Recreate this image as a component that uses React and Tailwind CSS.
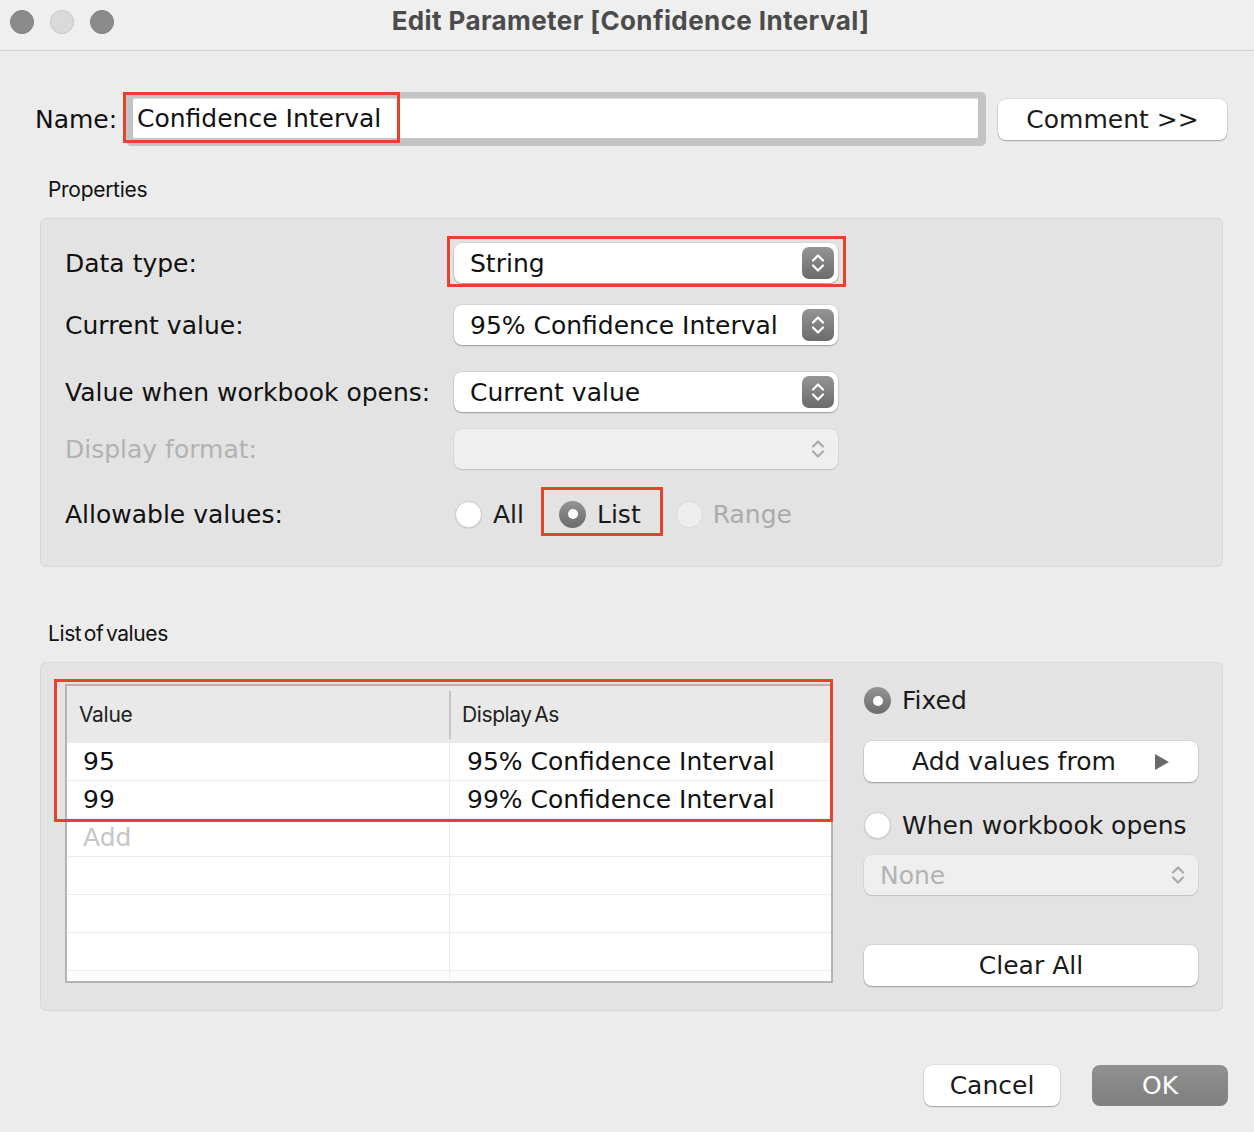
import React from "react";

const body = "font-['DejaVu_Sans',sans-serif]";
const sf = "font-['Inter',sans-serif]";

function Chevrons({ color }) {
  return (
    <svg width="32" height="32" viewBox="0 0 32 32">
      <path d="M11 13.5 L16 8.5 L21 13.5" stroke={color} strokeWidth="2.2" fill="none" strokeLinecap="round" strokeLinejoin="round" />
      <path d="M11 18.5 L16 23.5 L21 18.5" stroke={color} strokeWidth="2.2" fill="none" strokeLinecap="round" strokeLinejoin="round" />
    </svg>
  );
}

function Stepper() {
  return (
    <div className="w-[32px] h-[32px] rounded-[7px] bg-linear-to-b from-[#959595] to-[#6b6b6b] flex items-center justify-center">
      <Chevrons color="#ffffff" />
    </div>
  );
}

function Select({ text, disabled, width = "w-[384px]", textClass = "text-[#111]", pl = "pl-[16px]" }) {
  return (
    <div
      className={`${width} h-[40px] rounded-[8px] flex items-center justify-between ${pl} pr-[4px] ${
        disabled
          ? "bg-[#efefef] shadow-[0_0_0_0.5px_rgba(0,0,0,0.08),0_1px_1px_rgba(0,0,0,0.12)]"
          : "bg-white shadow-[0_0_0_0.5px_rgba(0,0,0,0.12),0_1px_1.5px_rgba(0,0,0,0.28)]"
      }`}
    >
      <span className={`${body} text-[25px] leading-none ${textClass}`}>{text}</span>
      {disabled ? <Chevrons color="#a9a9a9" /> : <Stepper />}
    </div>
  );
}

function Radio({ state }) {
  if (state === "on")
    return (
      <div className="w-[27px] h-[27px] rounded-full bg-linear-to-b from-[#949494] to-[#6c6c6c] flex items-center justify-center shrink-0">
        <div className="w-[10px] h-[10px] rounded-full bg-white" />
      </div>
    );
  if (state === "disabled")
    return <div className="w-[27px] h-[27px] rounded-full bg-[#eeeeee] border border-[#dadada] shrink-0" />;
  return (
    <div className="w-[27px] h-[27px] rounded-full bg-white border border-[#cdcdcd] shadow-[0_0.5px_1px_rgba(0,0,0,0.15)] shrink-0" />
  );
}

function Button({ children, className = "" }) {
  return (
    <div
      className={`h-[41px] rounded-[8px] bg-white shadow-[0_0_0_0.5px_rgba(0,0,0,0.12),0_1px_1.5px_rgba(0,0,0,0.28)] flex items-center ${body} text-[25px] leading-none text-[#1a1a1a] ${className}`}
    >
      {children}
    </div>
  );
}

function Row({ label, children, className = "", labelClass = "text-[#111]" }) {
  return (
    <div className={`flex items-center h-[40px] ${className}`}>
      <div className={`w-[389px] ${body} text-[25px] leading-none ${labelClass}`}>{label}</div>
      {children}
    </div>
  );
}

const RED = "border-[3px] border-[#e5432e]";

export default function App() {
  const rows = [
    ["95", "95% Confidence Interval", false],
    ["99", "99% Confidence Interval", false],
    ["Add", "", true],
    ["", "", false],
    ["", "", false],
    ["", "", false],
  ];
  return (
    <div className="w-[1254px] h-[1132px] bg-[#ececec] overflow-hidden flex flex-col">
      {/* Title bar */}
      <div className="h-[51px] shrink-0 bg-[#efefef] border-b border-[#d3d3d3] grid grid-cols-[1fr_auto_1fr]">
        <div className="flex gap-[16px] pl-[10px] pt-[10px]">
          <div className="w-[24px] h-[24px] rounded-full bg-[#8b8b8b] border border-[#7d7d7d]" />
          <div className="w-[24px] h-[24px] rounded-full bg-[#dadada] border border-[#c6c6c6]" />
          <div className="w-[24px] h-[24px] rounded-full bg-[#8b8b8b] border border-[#7d7d7d]" />
        </div>
        <div className={`${sf} pl-[7px] pt-[6px] text-[26px] leading-[30px] font-bold text-[#4b4b4b] tracking-[0.4px]`}>
          Edit Parameter [Confidence Interval]
        </div>
        <div />
      </div>

      {/* Name row */}
      <div className="mt-[41px] flex items-start pl-[35px]">
        <div className={`w-[91px] h-[54px] flex items-center ${body} text-[25px] leading-none text-[#111]`}>Name:</div>
        <div className="relative w-[860px] h-[54px] rounded-[5px] bg-[#c3c4c6] pt-[6px] pl-[7px] pr-[8px] pb-[8px]">
          <div className="h-[40px] bg-white flex items-center pl-[4px] shadow-[inset_0_1px_1px_rgba(0,0,0,0.15)]">
            <span className={`${body} text-[25px] leading-none text-[#111]`}>Confidence Interval</span>
          </div>
          <div className={`absolute left-[-3px] top-0 w-[277px] h-[51px] ${RED}`} />
        </div>
        <Button className="ml-[12px] mt-[7px] w-[229px] justify-center">Comment &gt;&gt;</Button>
      </div>

      {/* Properties */}
      <div className={`mt-[32px] pl-[48px] ${sf} text-[21px] leading-[24px] tracking-[-0.3px] text-[#111]`}>Properties</div>
      <div className="mt-[16px] ml-[40px] w-[1183px] h-[349px] shrink-0 rounded-[6px] bg-[#e3e3e3] border border-[#d8d8d8] pl-[24px] pt-[24px] flex flex-col">
        <Row label="Data type:">
          <div className="relative">
            <Select text="String" />
            <div className={`absolute left-[-7px] top-[-7px] w-[399px] h-[51px] ${RED}`} />
          </div>
        </Row>
        <Row label="Current value:" className="mt-[22px]">
          <Select text="95% Confidence Interval" />
        </Row>
        <Row label="Value when workbook opens:" className="mt-[27px]">
          <Select text="Current value" />
        </Row>
        <Row label="Display format:" className="mt-[17px]" labelClass="text-[#b2b2b2]">
          <Select text="" disabled />
        </Row>
        <Row label="Allowable values:" className="mt-[25px]">
          <div className="flex items-center h-[40px]">
            <div className="ml-[1px] flex items-center gap-[11px] h-[40px]">
              <Radio state="off" />
              <span className={`${body} text-[25px] leading-none text-[#1a1a1a]`}>All</span>
            </div>
            <div className="relative ml-[35px] flex items-center gap-[11px] h-[40px]">
              <Radio state="on" />
              <span className={`${body} text-[25px] leading-none text-[#1a1a1a]`}>List</span>
              <div className={`absolute left-[-18px] top-[-7px] w-[122px] h-[49px] ${RED}`} />
            </div>
            <div className="ml-[35px] flex items-center gap-[10px] h-[40px]">
              <Radio state="disabled" />
              <span className={`${body} text-[25px] leading-none text-[#ababab]`}>Range</span>
            </div>
          </div>
        </Row>
      </div>

      {/* List of values */}
      <div className={`mt-[55px] pl-[48px] ${sf} text-[21px] leading-[24px] tracking-[-0.4px] [word-spacing:-3px] text-[#111]`}>
        List of values
      </div>
      <div className="mt-[16px] ml-[40px] w-[1183px] h-[349px] shrink-0 rounded-[6px] bg-[#e3e3e3] border border-[#d8d8d8] pl-[24px] pt-[21px] flex">
        {/* table */}
        <div className="relative w-[768px] h-[299px] border-2 border-[#b4b4b4] bg-white flex flex-col">
          <div className="h-[57px] shrink-0 bg-[#e9e9e9] flex items-center">
            <div className={`w-[382px] pl-[12px] ${sf} text-[21px] leading-none tracking-[-0.3px] text-[#222]`}>Value</div>
            <div className="w-[2px] h-[48px] bg-[#c4c4c4]" />
            <div className={`pl-[11px] ${sf} text-[21px] leading-none tracking-[-0.4px] [word-spacing:-3px] text-[#222]`}>Display As</div>
          </div>
          <div className="flex-1 overflow-hidden flex flex-col">
            {rows.map(([a, b, placeholder], i) => (
              <div key={i} className="h-[38px] shrink-0 flex border-b border-[#ececec]">
                <div
                  className={`w-[383px] border-r border-[#ececec] pl-[16px] flex items-center ${body} text-[25px] leading-none ${
                    placeholder ? "text-[#c6c6c6]" : "text-[#111]"
                  }`}
                >
                  {a}
                </div>
                <div className={`pl-[17px] flex items-center ${body} text-[25px] leading-none text-[#111]`}>{b}</div>
              </div>
            ))}
            <div className="flex-1 flex">
              <div className="w-[383px] border-r border-[#ececec]" />
            </div>
          </div>
          <div className={`absolute left-[-13px] top-[-7px] w-[779px] h-[143px] ${RED}`} />
        </div>

        {/* right column */}
        <div className="ml-[31px] w-[334px] flex flex-col">
          <div className="mt-[3px] h-[27px] flex items-center gap-[11px]">
            <Radio state="on" />
            <span className={`${body} text-[25px] leading-none text-[#1a1a1a]`}>Fixed</span>
          </div>
          <Button className="mt-[27px] w-[334px] justify-between pl-[48px] pr-[28px]">
            <span>Add values from</span>
            <svg width="16" height="18" viewBox="0 0 16 18">
              <polygon points="1,1 15,9 1,17" fill="#6a6a6a" />
            </svg>
          </Button>
          <div className="mt-[30px] h-[27px] flex items-center gap-[11px]">
            <Radio state="off" />
            <span className={`${body} text-[25px] leading-none text-[#1a1a1a]`}>When workbook opens</span>
          </div>
          <div className="mt-[16px]">
            <Select text="None" disabled width="w-[334px]" textClass="text-[#b3b3b3]" />
          </div>
          <Button className="mt-[50px] w-[334px] justify-center">Clear All</Button>
        </div>
      </div>

      {/* Footer */}
      <div className="mt-[54px] flex justify-end pr-[26px] gap-[32px]">
        <Button className="w-[136px] justify-center">Cancel</Button>
        <div className={`w-[136px] h-[41px] rounded-[8px] bg-linear-to-b from-[#919191] to-[#7f7f7f] flex items-center justify-center ${body} text-[25px] leading-none text-white`}>
          OK
        </div>
      </div>
    </div>
  );
}
